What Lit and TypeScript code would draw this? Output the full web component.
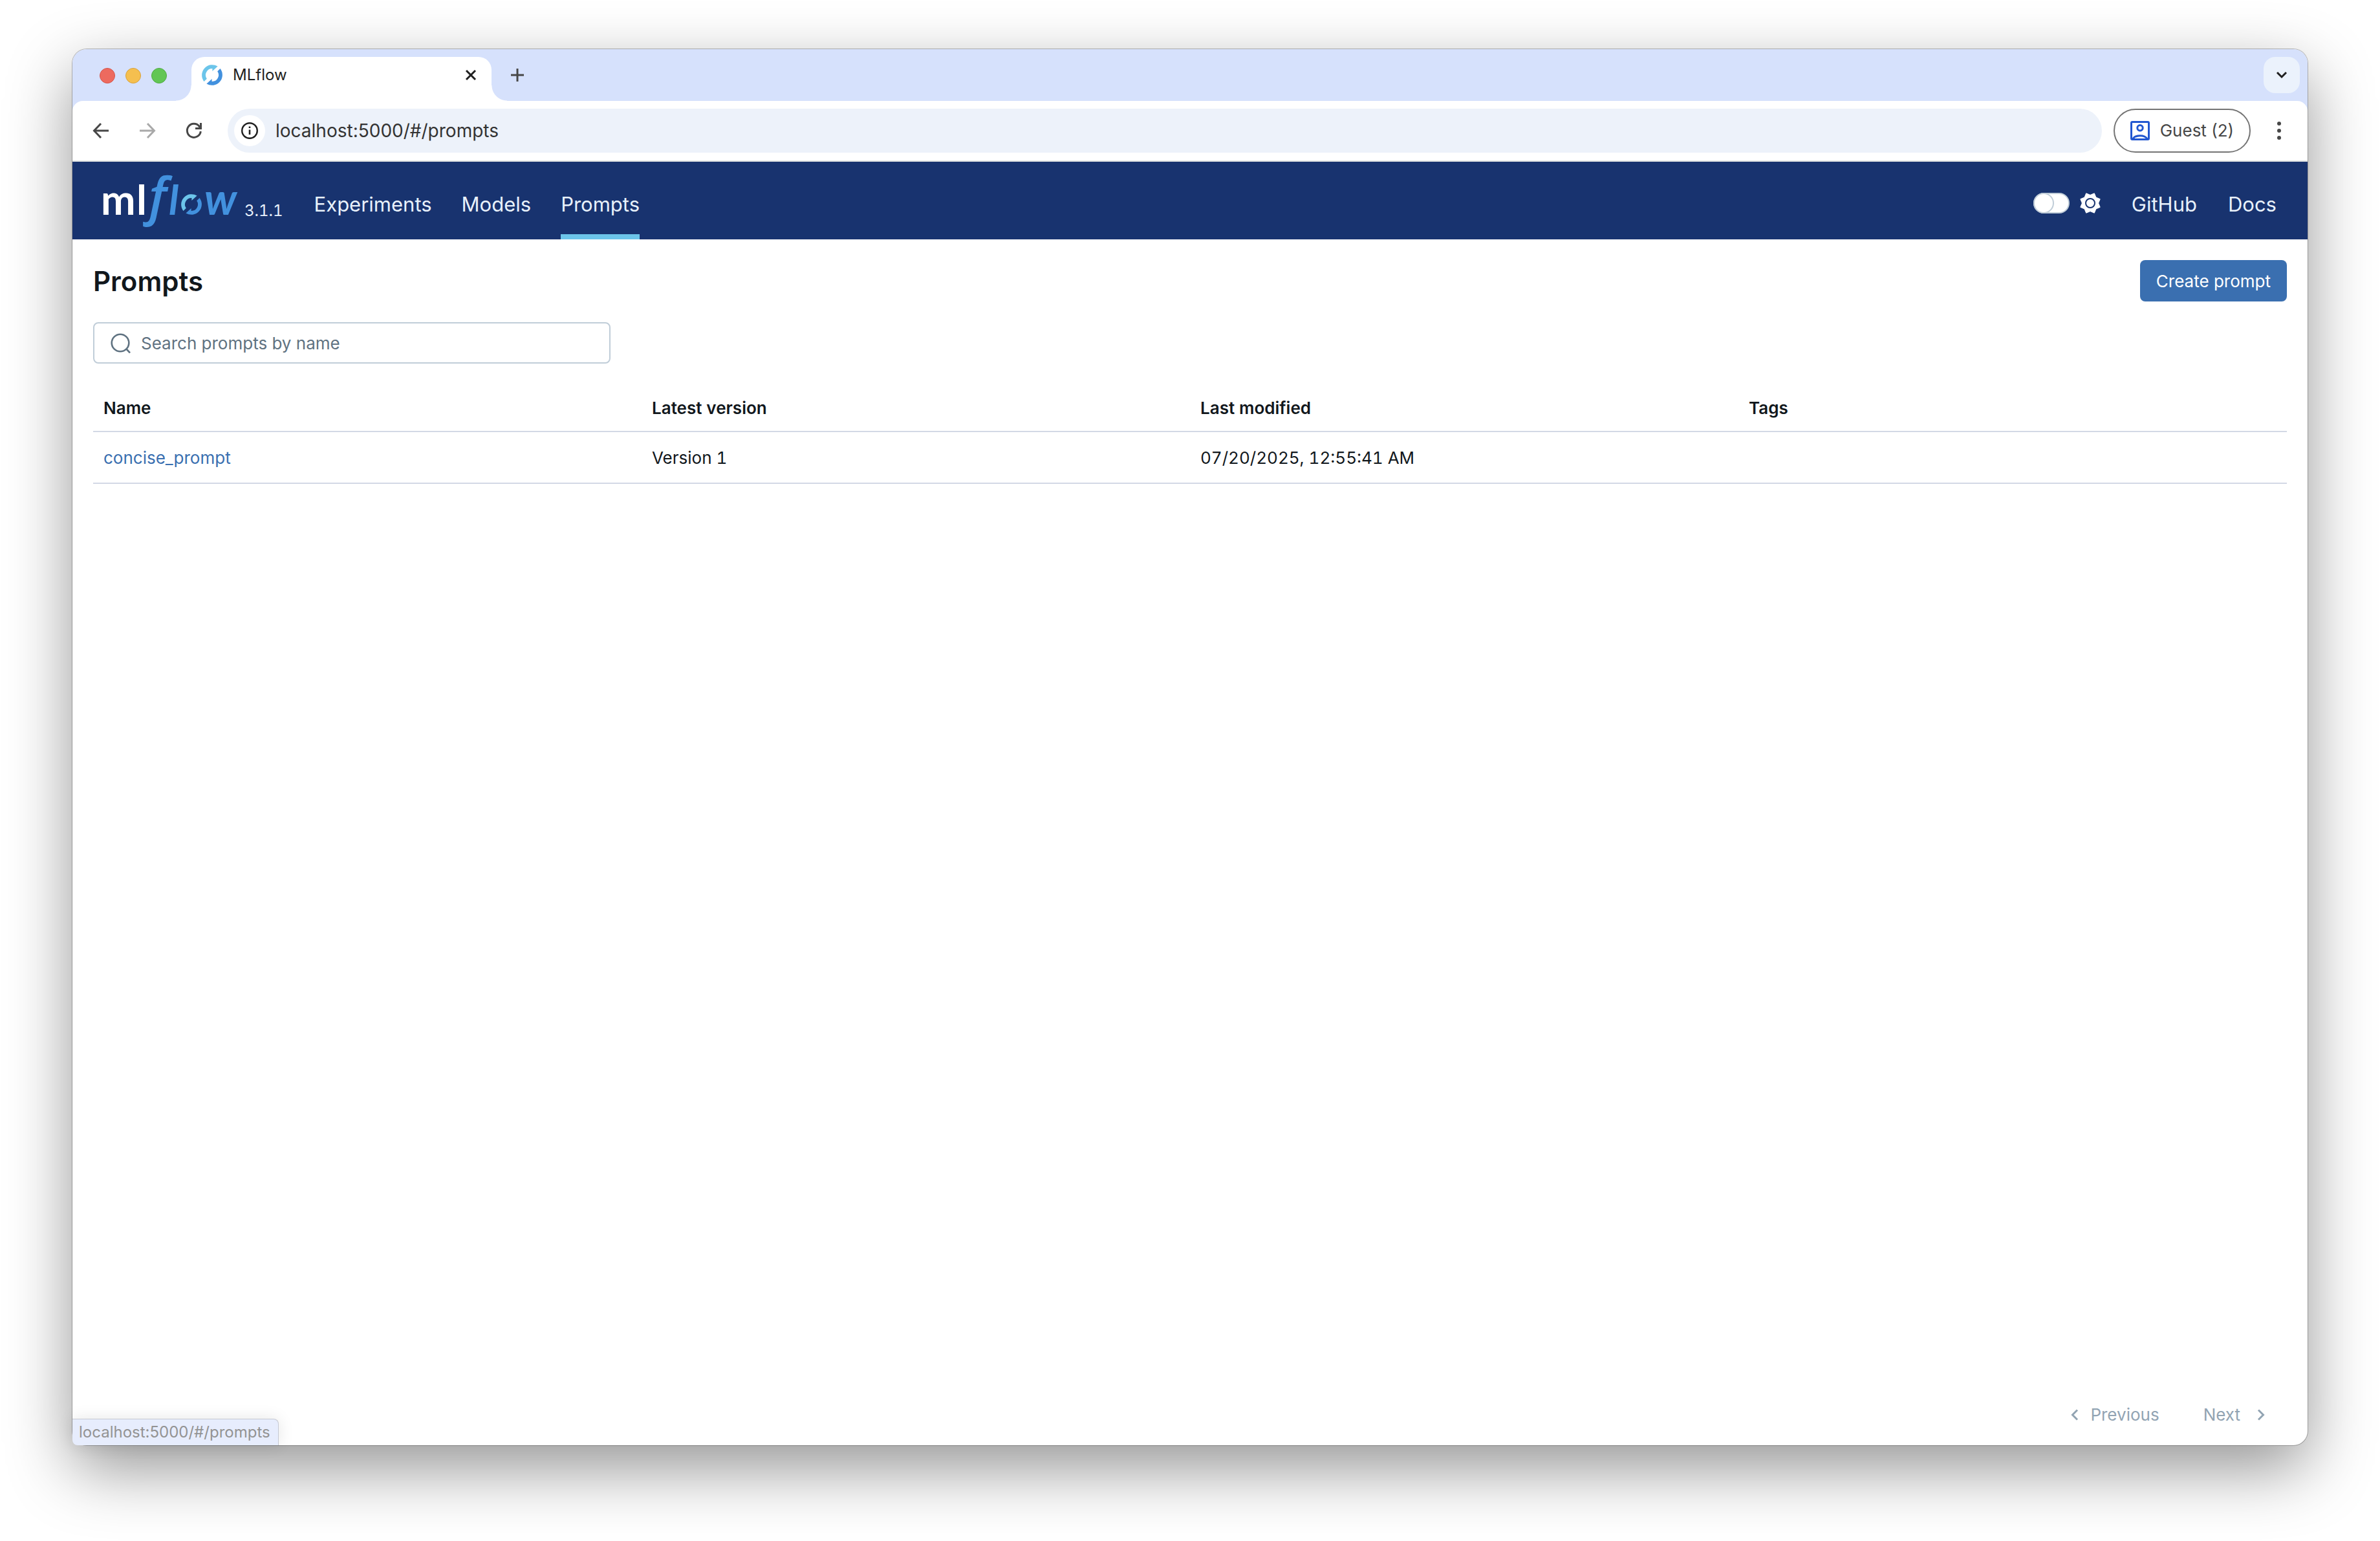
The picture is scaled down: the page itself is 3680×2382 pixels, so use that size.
import { LitElement, html, css, svg } from "lit";
import { customElement } from "lit/decorators.js";

interface Prompt {
  name: string;
  version: string;
  modified: string;
  tags: string;
}

const prompts: Prompt[] = [
  { name: "concise_prompt", version: "Version 1", modified: "07/20/2025, 12:55:41 AM", tags: "" },
];

// The two-arrow ring, drawn in a 32 x 32 box.
const ring = svg`
  <path fill="#6cc5ea" d="M3.500 26A16 16 0 0 1 24.600 2.600L16.400 10V6A10 10 0 0 0 7.800 21.700Z"/>
  <path fill="#4291de" d="M28.500 6A16 16 0 0 1 7.400 29.400L15.600 22V26A10 10 0 0 0 24.200 10.300Z"/>
`;

// A sixteen-point outline: tips halfway between the axes, valleys on them.
const sunPoints = Array.from({ length: 16 }, (_, i) => {
  const radius = i % 2 ? 16.4 : 12.6;
  const angle = (i * Math.PI) / 8;
  return `${(radius * Math.sin(angle)).toFixed(1)},${(-radius * Math.cos(angle)).toFixed(1)}`;
}).join(" ");

@customElement("browser-chrome")
export class BrowserChrome extends LitElement {
  static styles = css`
    :host { display: block; font-family: Inter, "Liberation Sans", sans-serif; }
    svg { display: block; }
    button { border: 0; padding: 0; margin: 0; background: none; font: inherit; color: #474747; display: flex; align-items: center; justify-content: center; }
    .strip { display: flex; align-items: flex-start; height: 68px; padding: 12px 12px 0 42px; background: #d6e1fc; border-radius: 22px 22px 0 0; }
    .lights { display: flex; gap: 16px; padding: 17px 14px 0 0; }
    .light { width: 24px; height: 24px; box-sizing: border-box; border-radius: 50%; border: 1px solid; }
    .close { background: #ed6a5f; border-color: #d6554a; }
    .mini { background: #f5bf4f; border-color: #d8a13a; }
    .full { background: #62c655; border-color: #50ab43; }
    .flare { width: 24px; height: 24px; align-self: flex-end; }
    .flare.left { background: radial-gradient(circle at 0 0, transparent 23px, #fff 24px); }
    .flare.right { background: radial-gradient(circle at 100% 0, transparent 23px, #fff 24px); }
    .tab { display: flex; align-items: center; gap: 16px; width: 464px; height: 68px; box-sizing: border-box; padding: 0 20px 12px 16px; background: #fff; border-radius: 20px 20px 0 0; color: #1f1f1f; font-size: 24px; line-height: 32px; }
    .tab-title { flex: 1; }
    .tab button { width: 24px; height: 24px; }
    .new { width: 32px; height: 56px; }
    .list { width: 56px; height: 56px; margin-left: auto; border-radius: 18px; background: #ebf2fc; }
    .bar-back { background: #d6e1fc; }
    .bar { display: flex; align-items: center; padding: 12px 24px; background: #fff; border-radius: 16px 16px 0 0; border-bottom: 2px solid #e1e3e3; }
    .nav { display: flex; gap: 32px; margin-right: 32px; }
    .nav button, .menu { width: 40px; height: 40px; }
    .url { flex: 1; display: flex; align-items: center; gap: 16px; height: 68px; padding-left: 10px; border-radius: 34px; background: #edf2fa; }
    .site { width: 48px; height: 48px; border-radius: 50%; background: #fff; }
    .url input { flex: 1; border: 0; outline: 0; padding: 0; background: none; font: inherit; font-size: 28px; line-height: 36px; color: #333; }
    .guest { height: 68px; box-sizing: border-box; margin: 0 24px 0 18px; padding: 0 24px; gap: 16px; border: 2px solid #747474; border-radius: 34px; font-size: 26px; line-height: 32px; }
  `;

  render() {
    return html`
      <div class="strip">
        <div class="lights">
          <span class="light close"></span><span class="light mini"></span><span class="light full"></span>
        </div>
        <span class="flare left"></span>
        <div class="tab">
          <svg width="32" height="32" viewBox="0 0 32 32">${ring}</svg>
          <span class="tab-title">MLflow</span>
          <button aria-label="Close tab">
            <svg width="24" height="24" viewBox="0 0 24 24"><path d="M5 5 19 19M19 5 5 19" stroke="#1f1f1f" stroke-width="3" fill="none"/></svg>
          </button>
        </div>
        <span class="flare right"></span>
        <button class="new" aria-label="New tab">
          <svg width="24" height="24" viewBox="0 0 24 24"><path d="M12 2V22M2 12H22" stroke="#474747" stroke-width="3" fill="none"/></svg>
        </button>
        <button class="list" aria-label="Search tabs">
          <svg width="24" height="24" viewBox="0 0 24 24"><path d="M5 8 12 15 19 8" stroke="#1f1f1f" stroke-width="3" fill="none"/></svg>
        </button>
      </div>
      <div class="bar-back">
        <div class="bar">
          <div class="nav">
            <button aria-label="Back">
              <svg width="32" height="32" viewBox="0 0 32 32"><path d="M28 16H6M16 5 5.500 16 16 27" stroke="#474747" stroke-width="3" fill="none"/></svg>
            </button>
            <button aria-label="Forward">
              <svg width="32" height="32" viewBox="0 0 32 32"><path d="M4 16H26M16 5 26.500 16 16 27" stroke="#a9a9a9" stroke-width="3" fill="none"/></svg>
            </button>
            <button aria-label="Reload">
              <svg width="32" height="32" viewBox="0 0 32 32"><path d="M26.300 17A10.500 10.500 0 1 1 24 9.200L26 11.800M26.500 4V12.500H18" stroke="#474747" stroke-width="3" fill="none"/></svg>
            </button>
          </div>
          <div class="url">
            <button class="site" aria-label="Site information">
              <svg width="28" height="28" viewBox="0 0 28 28"><circle cx="14" cy="14" r="11.800" stroke="#1f1f1f" stroke-width="2.400" fill="none"/><path d="M14 12.500V20M14 7.500V10" stroke="#1f1f1f" stroke-width="2.600"/></svg>
            </button>
            <input aria-label="Address" value="localhost:5000/#/prompts">
          </div>
          <button class="guest">
            <svg width="30" height="30" viewBox="0 0 30 30" fill="none" stroke="#2257d0" stroke-width="3"><rect x="1.500" y="1.500" width="27" height="27" rx="1.500"/><circle cx="15" cy="10.800" r="4.200"/><path d="M4 27.500C8 21 22 21 26 27.500"/></svg>
            Guest (2)
          </button>
          <button class="menu" aria-label="Menu">
            <svg width="32" height="32" viewBox="0 0 32 32" fill="#474747"><circle cx="16" cy="5" r="3"/><circle cx="16" cy="16" r="3"/><circle cx="16" cy="27" r="3"/></svg>
          </button>
        </div>
      </div>
    `;
  }
}

@customElement("app-header")
export class AppHeader extends LitElement {
  static styles = css`
    :host { display: block; font-family: Inter, "Liberation Sans", sans-serif; }
    svg { display: block; }
    .header { display: flex; align-items: flex-start; height: 120px; padding: 0 48px; background: #18336f; color: #e8f1fb; }
    .brand { display: flex; align-items: flex-end; gap: 8px; color: inherit; text-decoration: none; }
    .word { overflow: visible; font-family: Lato, sans-serif; font-weight: 700; font-size: 64px; }
    .slant { font-style: italic; fill: #4291de; }
    .wide { font-size: 68px; }
    .tall { font-family: "Open Sans", sans-serif; font-weight: 600; font-size: 80px; }
    .version { font-size: 24px; line-height: 32px; padding-bottom: 28px; font-variant-numeric: tabular-nums; }
    .links { display: flex; gap: 46px; margin-left: 48px; }
    .link { padding: 46px 0 26px; border-bottom: 8px solid transparent; font-size: 31px; line-height: 40px; color: inherit; text-decoration: none; }
    .current { border-color: #6cc5ea; }
    .right { margin-left: auto; display: flex; gap: 48px; }
    .theme { display: flex; gap: 16px; padding-top: 48px; }
    .switch { appearance: none; box-sizing: border-box; margin: 0; width: 56px; height: 32px; border: 2px solid #c0cdd8; border-radius: 16px; background: #fff; display: flex; align-items: center; }
    .switch::before { content: ""; width: 32px; height: 32px; margin-left: -2px; box-sizing: border-box; border: 2px solid #c0cdd8; border-radius: 50%; background: #fff; }
  `;

  render() {
    return html`
      <header class="header">
        <a class="brand" href="#/">
          <svg width="210" height="120" viewBox="160 250 210 120" class="word">
            <text x="156" y="332" fill="#fff">m</text>
            <text x="211" y="332" fill="#fff">l</text>
            <text x="230" y="332" class="slant tall">f</text>
            <text x="261" y="332" class="slant">l</text>
            <g transform="translate(280 300)">${ring}</g>
            <text x="316" y="332" class="slant wide">w</text>
          </svg>
          <span class="version">3.1.1</span>
        </a>
        <nav class="links">
          <a class="link" href="#/experiments">Experiments</a>
          <a class="link" href="#/models">Models</a>
          <a class="link current" href="#/prompts">Prompts</a>
        </nav>
        <div class="right">
          <div class="theme">
            <input class="switch" type="checkbox" role="switch" aria-label="Dark mode">
            <svg width="32" height="32" viewBox="-16 -16 32 32" fill="#fff">
              <polygon points=${sunPoints} stroke="#fff" stroke-linejoin="round"/>
              <circle r="7" stroke="#18336f" stroke-width="2"/>
            </svg>
          </div>
          <a class="link" href="#github">GitHub</a>
          <a class="link" href="#docs">Docs</a>
        </div>
      </header>
    `;
  }
}

@customElement("prompts-page")
export class PromptsPage extends LitElement {
  static styles = css`
    :host { display: flex; flex-direction: column; flex: 1; padding: 32px 32px 16px; font-family: Inter, "Liberation Sans", sans-serif; font-size: 26px; line-height: 32px; color: #11171c; }
    svg { display: block; }
    .top { display: flex; justify-content: space-between; align-items: center; }
    h1 { margin: 0; padding-top: 2px; font-size: 42px; line-height: 56px; font-weight: 600; }
    button { margin: 0; border: 0; background: none; font: inherit; }
    .create { height: 64px; padding: 2px 25px 0; border-radius: 8px; background: #3a6fb0; color: #fff; }
    .search { display: flex; align-items: center; gap: 16px; box-sizing: border-box; width: 800px; max-width: 100%; height: 64px; margin: 32px 0; padding: 0 24px; border: 2px solid #c0cdd8; border-radius: 8px; }
    .search input { flex: 1; border: 0; outline: 0; padding: 2px 0 0; background: none; font: inherit; color: inherit; }
    .search input::placeholder { color: #5f7281; opacity: 1; }
    table { width: 100%; table-layout: fixed; border-collapse: separate; border-spacing: 0; font-variant-numeric: tabular-nums; }
    th, td { padding: 2px 16px 0; text-align: left; border-bottom: 2px solid #d3d8e5; }
    th { height: 70px; font-weight: 600; }
    td { height: 76px; }
    td a { color: #3a6fb0; text-decoration: none; }
    .pages { display: flex; justify-content: flex-end; gap: 20px; margin-top: auto; }
    .pages button { display: flex; align-items: center; height: 64px; padding: 2px 24px 0; gap: 8px; color: #92a4b3; }
    .pages .next { gap: 16px; }
  `;

  render() {
    return html`
      <div class="top">
        <h1>Prompts</h1>
        <button class="create">Create prompt</button>
      </div>
      <label class="search">
        <svg width="32" height="32" viewBox="0 0 32 32" fill="none" stroke="#5f7281" stroke-width="2.600"><circle cx="16" cy="16" r="13.300"/><path d="M25 25 31 31.500"/></svg>
        <input type="text" aria-label="Search prompts by name" placeholder="Search prompts by name">
      </label>
      <table>
        <thead>
          <tr><th>Name</th><th>Latest version</th><th>Last modified</th><th>Tags</th></tr>
        </thead>
        <tbody>
          ${prompts.map(
            (p) => html`<tr>
              <td><a href="#/prompts/${p.name}">${p.name}</a></td>
              <td>${p.version}</td>
              <td>${p.modified}</td>
              <td>${p.tags}</td>
            </tr>`,
          )}
        </tbody>
      </table>
      <div class="pages">
        <button disabled>
          <svg width="32" height="32" viewBox="0 0 32 32"><path d="M20 8.500 12.500 16 20 23.500" fill="none" stroke="#92a4b3" stroke-width="3"/></svg>
          Previous
        </button>
        <button class="next" disabled>
          Next
          <svg width="32" height="32" viewBox="0 0 32 32"><path d="M12 8.500 19.500 16 12 23.500" fill="none" stroke="#92a4b3" stroke-width="3"/></svg>
        </button>
      </div>
    `;
  }
}

@customElement("app-root")
export class AppRoot extends LitElement {
  static styles = css`
    :host { display: flex; box-sizing: border-box; min-height: 100vh; padding: 76px 112px 148px; background: #fff; font-family: Inter, "Liberation Sans", sans-serif; }
    .window { position: relative; flex: 1; min-width: 0; display: flex; flex-direction: column; background: #fff; border-radius: 22px; box-shadow: 0 0 0 1px rgba(0, 0, 0, 0.25), 0 36px 100px rgba(0, 0, 0, 0.42); }
    .status { position: absolute; left: 0; bottom: 0; padding: 4px 12px 4px 10px; background: #e7edfd; color: #939393; font-size: 24px; line-height: 32px; border: 1px solid #c6c9d2; border-width: 1px 1px 0 0; border-radius: 0 8px 0 8px; box-shadow: 0 0 24px rgba(0, 0, 0, 0.1); }
  `;

  render() {
    return html`
      <div class="window">
        <browser-chrome></browser-chrome>
        <app-header></app-header>
        <prompts-page></prompts-page>
        <div class="status">localhost:5000/#/prompts</div>
      </div>
    `;
  }
}
